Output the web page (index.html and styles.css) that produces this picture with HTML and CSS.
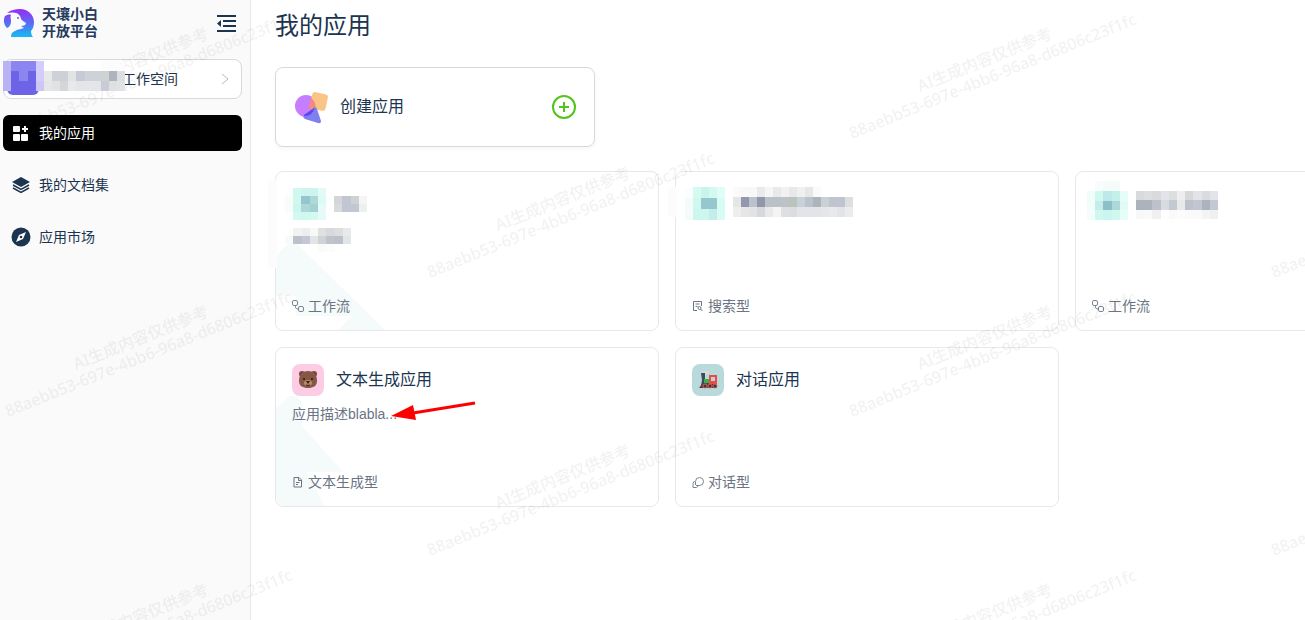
FILE: index.html
```
<!DOCTYPE html>
<html lang="zh-CN">
<head>
    <meta charset="UTF-8">
    <meta name="viewport" content="width=device-width, initial-scale=1.0">
    <title>我的应用</title>
    <link rel="stylesheet" href="styles.css">
</head>
<body>
    <aside class="sidebar">
        <div class="sidebar-head">
            <a href="#" class="brand">
                <svg class="brand-logo" viewBox="0 0 32 30" width="32" height="30">
                    <defs>
                        <linearGradient id="logo-fill" gradientUnits="userSpaceOnUse" x1="0" y1="1" x2="0" y2="29">
                            <stop offset="0" stop-color="#9a2bf5"/>
                            <stop offset="0.5" stop-color="#5b6cf2"/>
                            <stop offset="1" stop-color="#12bdf3"/>
                        </linearGradient>
                    </defs>
                    <g fill="url(#logo-fill)">
                        <path d="M4 5C8 2 12 1 17 1c8 0 14 6 14 13 0 4-1 7-3 9 0 3 1 5 2 6H8c0-3 1-5 4-6 3-2 7-2 9-3l-3-2c3 0 5-1 5-3l-3-2c-2-1-2-3-3-5-2-4-7-4-13-3z"/>
                        <path d="M2 8c-2 4-1 9 2 12 3-1 4-4 4-7 0-2-1-4 0-6-2-1-4 0-6 1z"/>
                        <circle cx="15" cy="10" r="1"/>
                    </g>
                </svg>
                <span class="brand-name">天壤小白<br>开放平台</span>
            </a>
            <button type="button" class="collapse" aria-label="收起菜单">
                <svg viewBox="0 0 20 18" width="20" height="18" fill="none" stroke="#1b3450" stroke-width="2">
                    <path d="M0 2h19M6 7h13M6 12h13M0 17h19"/>
                    <path d="M4 6v7L0 9.500z" fill="#1b3450" stroke="none"/>
                </svg>
            </button>
        </div>

        <button type="button" class="workspace">
            <span class="avatar"></span>
            <span class="workspace-name">工作空间</span>
            <svg class="chevron" viewBox="0 0 8 12" width="8" height="12" fill="none" stroke="#b4b8be"><path d="M1 1l6 5-6 5"/></svg>
            <svg class="mask mask-avatar" data-mask="avatar"></svg>
            <svg class="mask mask-workspace" data-mask="workspace"></svg>
        </button>

        <nav class="menu">
            <a href="#" class="menu-item active">
                <svg viewBox="0 0 20 20" width="20" height="20" fill="#fff">
                    <rect x="2" y="3" width="7" height="6" rx="1"/>
                    <rect x="2" y="11" width="7" height="7" rx="1"/>
                    <rect x="10" y="11" width="7" height="7" rx="1"/>
                    <path d="M13 3h2v2h2v2h-2v2h-2V7h-2V5h2z"/>
                </svg>
                我的应用
            </a>
            <a href="#" class="menu-item">
                <svg viewBox="0 0 20 20" width="20" height="20" fill="#1b3450">
                    <path d="M10 2l9 5-9 5-9-5z"/>
                    <path d="M2 10l8 4.500 8-4.500M2 13l8 4.500 8-4.500" fill="none" stroke="#1b3450" stroke-width="1.500"/>
                </svg>
                我的文档集
            </a>
            <a href="#" class="menu-item">
                <svg viewBox="0 0 20 20" width="20" height="20">
                    <circle cx="10" cy="10" r="9.500" fill="#1b3450"/>
                    <path d="M15 5l-3 7-7 3 3-7z" fill="#fff"/>
                    <circle cx="10" cy="10" r="1.300" fill="#1b3450"/>
                </svg>
                应用市场
            </a>
        </nav>
    </aside>

    <main class="content">
        <h1>我的应用</h1>

        <button type="button" class="create">
            <svg viewBox="0 0 34 34" width="34" height="34">
                <circle cx="12" cy="16" r="11" fill="#c77dff"/>
                <rect x="17" y="3" width="16" height="17" rx="3" fill="#fbc487" transform="rotate(12 25 11)"/>
                <path d="M17 8a11 11 0 0 1 4 13c-5-1-7-2-6-5z" fill="#f08a86"/>
                <path d="M20 18q2-2 3 1l4 12q0 3-3 2L11 29q-3-2-1-4z" fill="#7f7ff0"/>
                <path d="M21 17q-3 10-11 9l0-1 10-7z" fill="#5a48f5"/>
            </svg>
            <span class="create-label">创建应用</span>
            <svg viewBox="0 0 26 26" width="26" height="26" fill="none" stroke="#52c41a" stroke-width="2">
                <circle cx="13" cy="13" r="11"/>
                <path d="M13 8v10M8 13h10"/>
            </svg>
        </button>

        <section class="cards">
            <article class="card">
                <svg class="card-bg" viewBox="0 0 120 158" width="120" height="158" fill="#f4fbfa">
                    <path d="M0 84l12-12h9l89 87H61l15-15H20v-20H0z"/>
                </svg>
                <span class="edge edge-tall"></span>
                <svg class="mask mask-icon-1" data-mask="icon1"></svg>
                <svg class="mask mask-title-1" data-mask="title1"></svg>
                <svg class="mask mask-desc-1" data-mask="desc1"></svg>
                <footer class="card-type">
                    <svg viewBox="0 0 12 12" width="12" height="12" fill="none" stroke="#7b8494">
                        <rect x="0.500" y="0.500" width="5" height="5" rx="1.500"/>
                        <rect x="6.500" y="6.500" width="5" height="5" rx="1.500"/>
                        <path d="M3.500 5.500v2q0 1.500 3 1.500"/>
                    </svg>
                    工作流
                </footer>
            </article>

            <article class="card">
                <span class="edge"></span>
                <svg class="mask mask-icon-2" data-mask="icon2"></svg>
                <svg class="mask mask-title-2" data-mask="title2"></svg>
                <footer class="card-type">
                    <svg viewBox="0 0 12 12" width="12" height="12" fill="none" stroke="#6b7482">
                        <path d="M5 10.500H1.500v-9h8V6M3.500 4h4M3.500 6.500h2"/>
                        <circle cx="7.500" cy="8" r="1.500"/>
                        <path d="M8.500 9l2 2"/>
                    </svg>
                    搜索型
                </footer>
            </article>

            <article class="card">
                <svg class="mask mask-icon-3" data-mask="icon3"></svg>
                <svg class="mask mask-title-3" data-mask="title3"></svg>
                <footer class="card-type">
                    <svg viewBox="0 0 12 12" width="12" height="12" fill="none" stroke="#7b8494">
                        <rect x="0.500" y="0.500" width="5" height="5" rx="1.500"/>
                        <rect x="6.500" y="6.500" width="5" height="5" rx="1.500"/>
                        <path d="M3.500 5.500v2q0 1.500 3 1.500"/>
                    </svg>
                    工作流
                </footer>
            </article>

            <article class="card">
                <svg class="card-bg" viewBox="0 0 120 158" width="120" height="158" fill="#f4fbfa">
                    <path d="M0 60l14-12h5l7 6v24l41 46H30l19 34H8q-8 0-8-8z"/>
                </svg>
                <div class="card-head">
                    <span class="app-icon pink">
                        <svg viewBox="0 0 20 20" width="20" height="20">
                            <circle cx="4" cy="4" r="3" fill="#7a4b3c"/>
                            <circle cx="16" cy="4" r="3" fill="#7a4b3c"/>
                            <path d="M10 1c6 0 9 4 9 10 0 5-4 7-9 7s-9-2-9-7C1 5 4 1 10 1z" fill="#875645"/>
                            <ellipse cx="10" cy="13" rx="4" ry="3" fill="#b98967"/>
                            <path d="M8 11h4l-2 3z" fill="#2b2320"/>
                            <path d="M8 15q2 1 4 0" fill="none" stroke="#2b2320"/>
                            <circle cx="6" cy="9" r="1" fill="#1d1a1a"/>
                            <circle cx="14" cy="9" r="1" fill="#1d1a1a"/>
                        </svg>
                    </span>
                    <h2>文本生成应用</h2>
                </div>
                <p class="card-desc">应用描述blabla...</p>
                <svg class="arrow" viewBox="0 0 86 22" width="86" height="22">
                    <path d="M84 3L22 13" stroke="#f00" stroke-width="3"/>
                    <path d="M0 16L22 5l3 15z" fill="#f00"/>
                </svg>
                <footer class="card-type">
                    <svg viewBox="0 0 12 12" width="12" height="12" fill="none" stroke="#6b7482">
                        <path d="M2 1.500h5l2.500 2.500v7H2zM6.500 1.500v3h3M4 6.500h3.500M4 8.500h2"/>
                    </svg>
                    文本生成型
                </footer>
            </article>

            <article class="card">
                <div class="card-head">
                    <span class="app-icon teal">
                        <svg viewBox="0 0 20 20" width="20" height="20">
                            <path d="M3 2q3-2 8-1l1 1-2 2H4z" fill="#d5d8dc"/>
                            <path d="M3 3h4v7h4v6H3l1-6z" fill="#414a5c"/>
                            <path d="M6 9h5v4H6z" fill="#3fae49"/>
                            <path d="M11 5h8v9h-8z" fill="#ef4a3e"/>
                            <path d="M13 7h4v4h-4z" fill="#a9d6ee"/>
                            <path d="M1 18l3-4h14l1 4z" fill="#5a3a3c"/>
                            <circle cx="7" cy="16" r="2" fill="#2f3446" stroke="#e0604f"/>
                            <circle cx="12" cy="16" r="2" fill="#2f3446" stroke="#e0604f"/>
                            <circle cx="17" cy="16" r="2" fill="#2f3446" stroke="#e0604f"/>
                        </svg>
                    </span>
                    <h2>对话应用</h2>
                </div>
                <footer class="card-type">
                    <svg viewBox="0 0 12 12" width="12" height="12" fill="none" stroke="#7b8494">
                        <path d="M3.500 9V5.500A4 4 0 1 1 7.500 9.500H4"/>
                        <path d="M2.500 5q-2 2-1.500 4v2.500h3.500l2-1.500"/>
                    </svg>
                    对话型
                </footer>
            </article>
        </section>
    </main>

    <!-- Repeating watermark -->
    <svg class="watermark" width="100%" height="100%" aria-hidden="true">
        <defs>
            <g id="mark">
                <text x="74" y="-42" transform="rotate(-22 74 -42)">AI生成内容仅供参考</text>
                <text x="6" y="5" transform="rotate(-22 6 5)">88aebb53-697e-4bb6-96a8-d6806c23f1fc</text>
            </g>
            <pattern id="marks" x="0" y="8" width="844" height="278" patternUnits="userSpaceOnUse">
                <use href="#mark" x="2" y="126"/>
                <use href="#mark" x="424" y="265"/>
            </pattern>
        </defs>
        <rect width="100%" height="100%" fill="url(#marks)"/>
    </svg>

    <script src="script.js"></script>
</body>
</html>
```

FILE: styles.css
```
/* Reset some default styles */
* {
    box-sizing: border-box;
}

body, h1, h2, p {
    margin: 0;
    padding: 0;
}

body {
    display: flex;
    min-height: 100vh;
    overflow: hidden;
    background: #fff;
    color: #1b3450;
    font-family: 'Liberation Sans', 'Noto Sans CJK SC', sans-serif;
    font-size: 14px;
    line-height: 20px;
}

button {
    font: inherit;
    color: inherit;
    cursor: pointer;
}

a {
    color: inherit;
    text-decoration: none;
}

svg {
    display: block;
    flex: none;
}

/* Sidebar */
.sidebar {
    flex: none;
    width: 251px;
    padding: 0 8px 0 3px;
    background: #fafafa;
    border-right: 1px solid #e8e8e8;
}

.sidebar-head {
    display: flex;
    align-items: center;
    justify-content: space-between;
    height: 46px;
    margin-bottom: 13px;
    padding-right: 5px;
}

.brand {
    display: flex;
    align-items: center;
    gap: 7px;
}

.brand-name {
    font-size: 14px;
    font-weight: bold;
    line-height: 17px;
    color: #263a60;
}

.collapse {
    padding: 0;
    border: none;
    background: none;
}

.workspace {
    position: relative;
    display: flex;
    align-items: center;
    width: 100%;
    height: 40px;
    margin-bottom: 16px;
    padding: 0 12px 0 3px;
    border: 1px solid #d9d9d9;
    border-radius: 8px;
    background: #fff;
}

.avatar {
    width: 32px;
    height: 32px;
    border-radius: 6px;
    background: #6c63e6;
}

.workspace-name {
    margin-left: 83px;
}

.chevron {
    margin-left: auto;
}

.menu {
    display: flex;
    flex-direction: column;
    gap: 16px;
}

.menu-item {
    display: flex;
    align-items: center;
    gap: 8px;
    height: 36px;
    padding: 0 8px;
    border-radius: 6px;
}

.menu-item.active {
    background: #000;
    color: #fff;
}

/* Main content */
.content {
    flex: 1;
    min-width: 0;
    padding: 8px 0 24px 24px;
    overflow: hidden;
}

h1 {
    margin-bottom: 23px;
    font-size: 24px;
    font-weight: normal;
    line-height: 36px;
}

.create {
    display: flex;
    align-items: center;
    width: 320px;
    height: 80px;
    margin-bottom: 24px;
    padding: 0 17px 0 18px;
    border: 1px solid #d9d9d9;
    border-radius: 8px;
    background: #fff;
    box-shadow: 0 2px 4px rgba(0, 0, 0, 0.04);
}

.create-label {
    flex: 1;
    margin-left: 12px;
    font-size: 16px;
    line-height: 24px;
    text-align: left;
}

.cards {
    display: grid;
    grid-template-columns: repeat(3, 384px);
    gap: 16px;
}

.card {
    position: relative;
    display: flex;
    flex-direction: column;
    height: 160px;
    padding: 16px;
    border: 1px solid #e8e8e8;
    border-radius: 8px;
}

.card-bg {
    position: absolute;
    left: 0;
    top: 0;
}

.card-head {
    position: relative;
    display: flex;
    align-items: center;
    gap: 12px;
}

.app-icon {
    display: flex;
    align-items: center;
    justify-content: center;
    width: 32px;
    height: 32px;
    border-radius: 8px;
}

.pink {
    background: #fccce5;
}

.teal {
    background: #b8dadb;
}

h2 {
    font-size: 16px;
    font-weight: normal;
    line-height: 24px;
}

.card-desc {
    position: relative;
    margin-top: 8px;
    color: #6b7482;
}

.card-type {
    position: relative;
    display: flex;
    align-items: center;
    gap: 4px;
    margin-top: auto;
    line-height: 16px;
    color: #6b7482;
}

.arrow {
    position: absolute;
    left: 115px;
    top: 52px;
}

/* Pixelated masks over private names */
.mask {
    position: absolute;
    z-index: 2;
}

.mask-avatar {
    left: -1px;
    top: 1px;
    width: 41px;
    height: 30px;
}

.mask-workspace {
    left: 40px;
    top: 1px;
    width: 81px;
    height: 30px;
}

.mask-icon-1 {
    left: 9px;
    top: 16px;
    width: 41px;
    height: 32px;
}

.mask-title-1 {
    left: 58px;
    top: 24px;
    width: 33px;
    height: 16px;
}

.mask-desc-1 {
    left: 9px;
    top: 56px;
    width: 66px;
    height: 24px;
}

.mask-icon-2 {
    left: 9px;
    top: 15px;
    width: 40px;
    height: 33px;
}

.mask-title-2 {
    left: 57px;
    top: 15px;
    width: 120px;
    height: 30px;
}

.mask-icon-3 {
    left: 11px;
    top: 9px;
    width: 41px;
    height: 39px;
}

.mask-title-3 {
    left: 60px;
    top: 19px;
    width: 82px;
    height: 28px;
}

.edge {
    position: absolute;
    left: -8px;
    top: 15px;
    width: 9px;
    height: 30px;
    background: #fcfcfc;
}

.edge-tall {
    top: 8px;
    height: 88px;
}

.watermark {
    position: fixed;
    left: 0;
    top: 0;
    z-index: 1;
    pointer-events: none;
    fill: rgba(0, 0, 0, 0.05);
    font-family: 'Noto Sans', 'Noto Sans CJK SC', sans-serif;
    font-size: 16px;
    font-weight: 500;
}
```

FILE: script.js
```
// one hex colour per cell, "-" leaves the cell empty
const masks = {
    avatar: [
        'b9b3f4 8b85ef 8b85ef 8b85ef d3cef9',
        'b9b3f4 6c63e6 8b85ef 6c63e6 d3cef9',
        'b9b3f4 6c63e6 6c63e6 6c63e6 cdc7f7'
    ],
    workspace: [
        'fff fff fff fff fff fff fff fcfcfc fcfcfc fcfcfc',
        'e8e8e8 cdd2d8 cdd0d4 e2e3e5 c5cad4 ced2d6 ced2d6 cdd2d2 adb4bc dcdee2',
        'e4e6e8 e2e2e2 d5d6d8 e8e9ea e4e5e8 e4e5e8 e4e5e8 c9ccd8 dee0e2 e0e2e4'
    ],
    icon1: [
        'fdfefe d0f8ee cff4f0 cff4f0 e2fbf7',
        'f8fdfc d0f8ee 93c6ce acd8d8 dcfbf5',
        'f8fdfc cdf7ee acd8d8 a2d0d4 e4fbf7',
        'fefefe d3f9f0 cff8ef d3f9f0 e6fbf8'
    ],
    title1: [
        'd4d6da c2c6d2 ced2d4 f3f6f5',
        'd8dadd c2c6d2 c1c8d2 eef0f0'
    ],
    desc1: [
        '- f1f2f2 edeeee f8f8f8 dfe0e2 d8d9dc dcdee0 e8e9ea',
        'f9fafa bcc2ca c3c8d4 e2e4e6 cfd3d4 bfc4cb bbc1c8 e2e4e6',
        '- - - - fafafa fcfcfc - -'
    ],
    icon2: [
        'fcfefe d5faf1 c9f4ed d3f9f0 e2fcf7',
        'f4fcfa cff8f0 95c7cd 95c7cd d8fbf4',
        'f4fcfa cdf7ee cdf7ee c3ede9 d8fbf4'
    ],
    title2: [
        'fafafa f8f8f8 f8f8f8 eaeaea f6f6f6 e9e9ea f1f1f1 e7e8e9 f0f0f0 e6e7e8 fafafa - - - -',
        'e5e6e8 9297ab bcc1cb 9297ab bcc1c9 b9c2c8 bcc2c8 b9c4bd c9d1d8 bcc2ca acb5bc c9d0d6 bfc4ce bfc4ce dcdee0',
        'eeeeef e6e6e7 e2e3e5 d6d8db e8e9ea f4f4f4 dedfe0 dcdddf e2e4e9 e2e4e9 e2e4e8 e5e6e8 e8e9ea e2e4e8 ebebec'
    ],
    icon3: [
        '- f6fdfc f4fcfa f4fcfa -',
        'f0fdfa cff8ef bee9ea c3f1ea e6fcf8',
        'f0fdfa c4ede9 8dbfc8 acd8d8 e0fbf5',
        'f3fdfb cff8ef c9f6ee cff8ef e8fcf8'
    ],
    title3: [
        'd8dadd dcdee0 d8dadd e2e4e9 dcdee0 eeeeee d7d7d8 e2e4e9 d9dbde e2e4e9',
        'acb3bc acb3bc bdc1cc d9dbe0 c2c9d2 e9e9e9 bdc1cc c1c6d1 acb3bc c2c9d2',
        'f8f8f8 f9f9f9 f0f0f0 fefefe fafafa fcfcfc fafafa fafafa f4f4f4 f0f0f0'
    ]
};

document.querySelectorAll('[data-mask]').forEach(svg => {
    const rows = masks[svg.dataset.mask].map(row => row.split(' '));
    svg.setAttribute('viewBox', `0 0 ${rows[0].length} ${rows.length}`);
    svg.setAttribute('preserveAspectRatio', 'none');
    svg.setAttribute('shape-rendering', 'crispEdges');

    rows.forEach((row, y) => row.forEach((color, x) => {
        if (color === '-') return;
        const cell = document.createElementNS('http://www.w3.org/2000/svg', 'rect');
        cell.setAttribute('x', x);
        cell.setAttribute('y', y);
        cell.setAttribute('width', 1);
        cell.setAttribute('height', 1);
        cell.setAttribute('fill', '#' + color);
        svg.appendChild(cell);
    }));
});
```
